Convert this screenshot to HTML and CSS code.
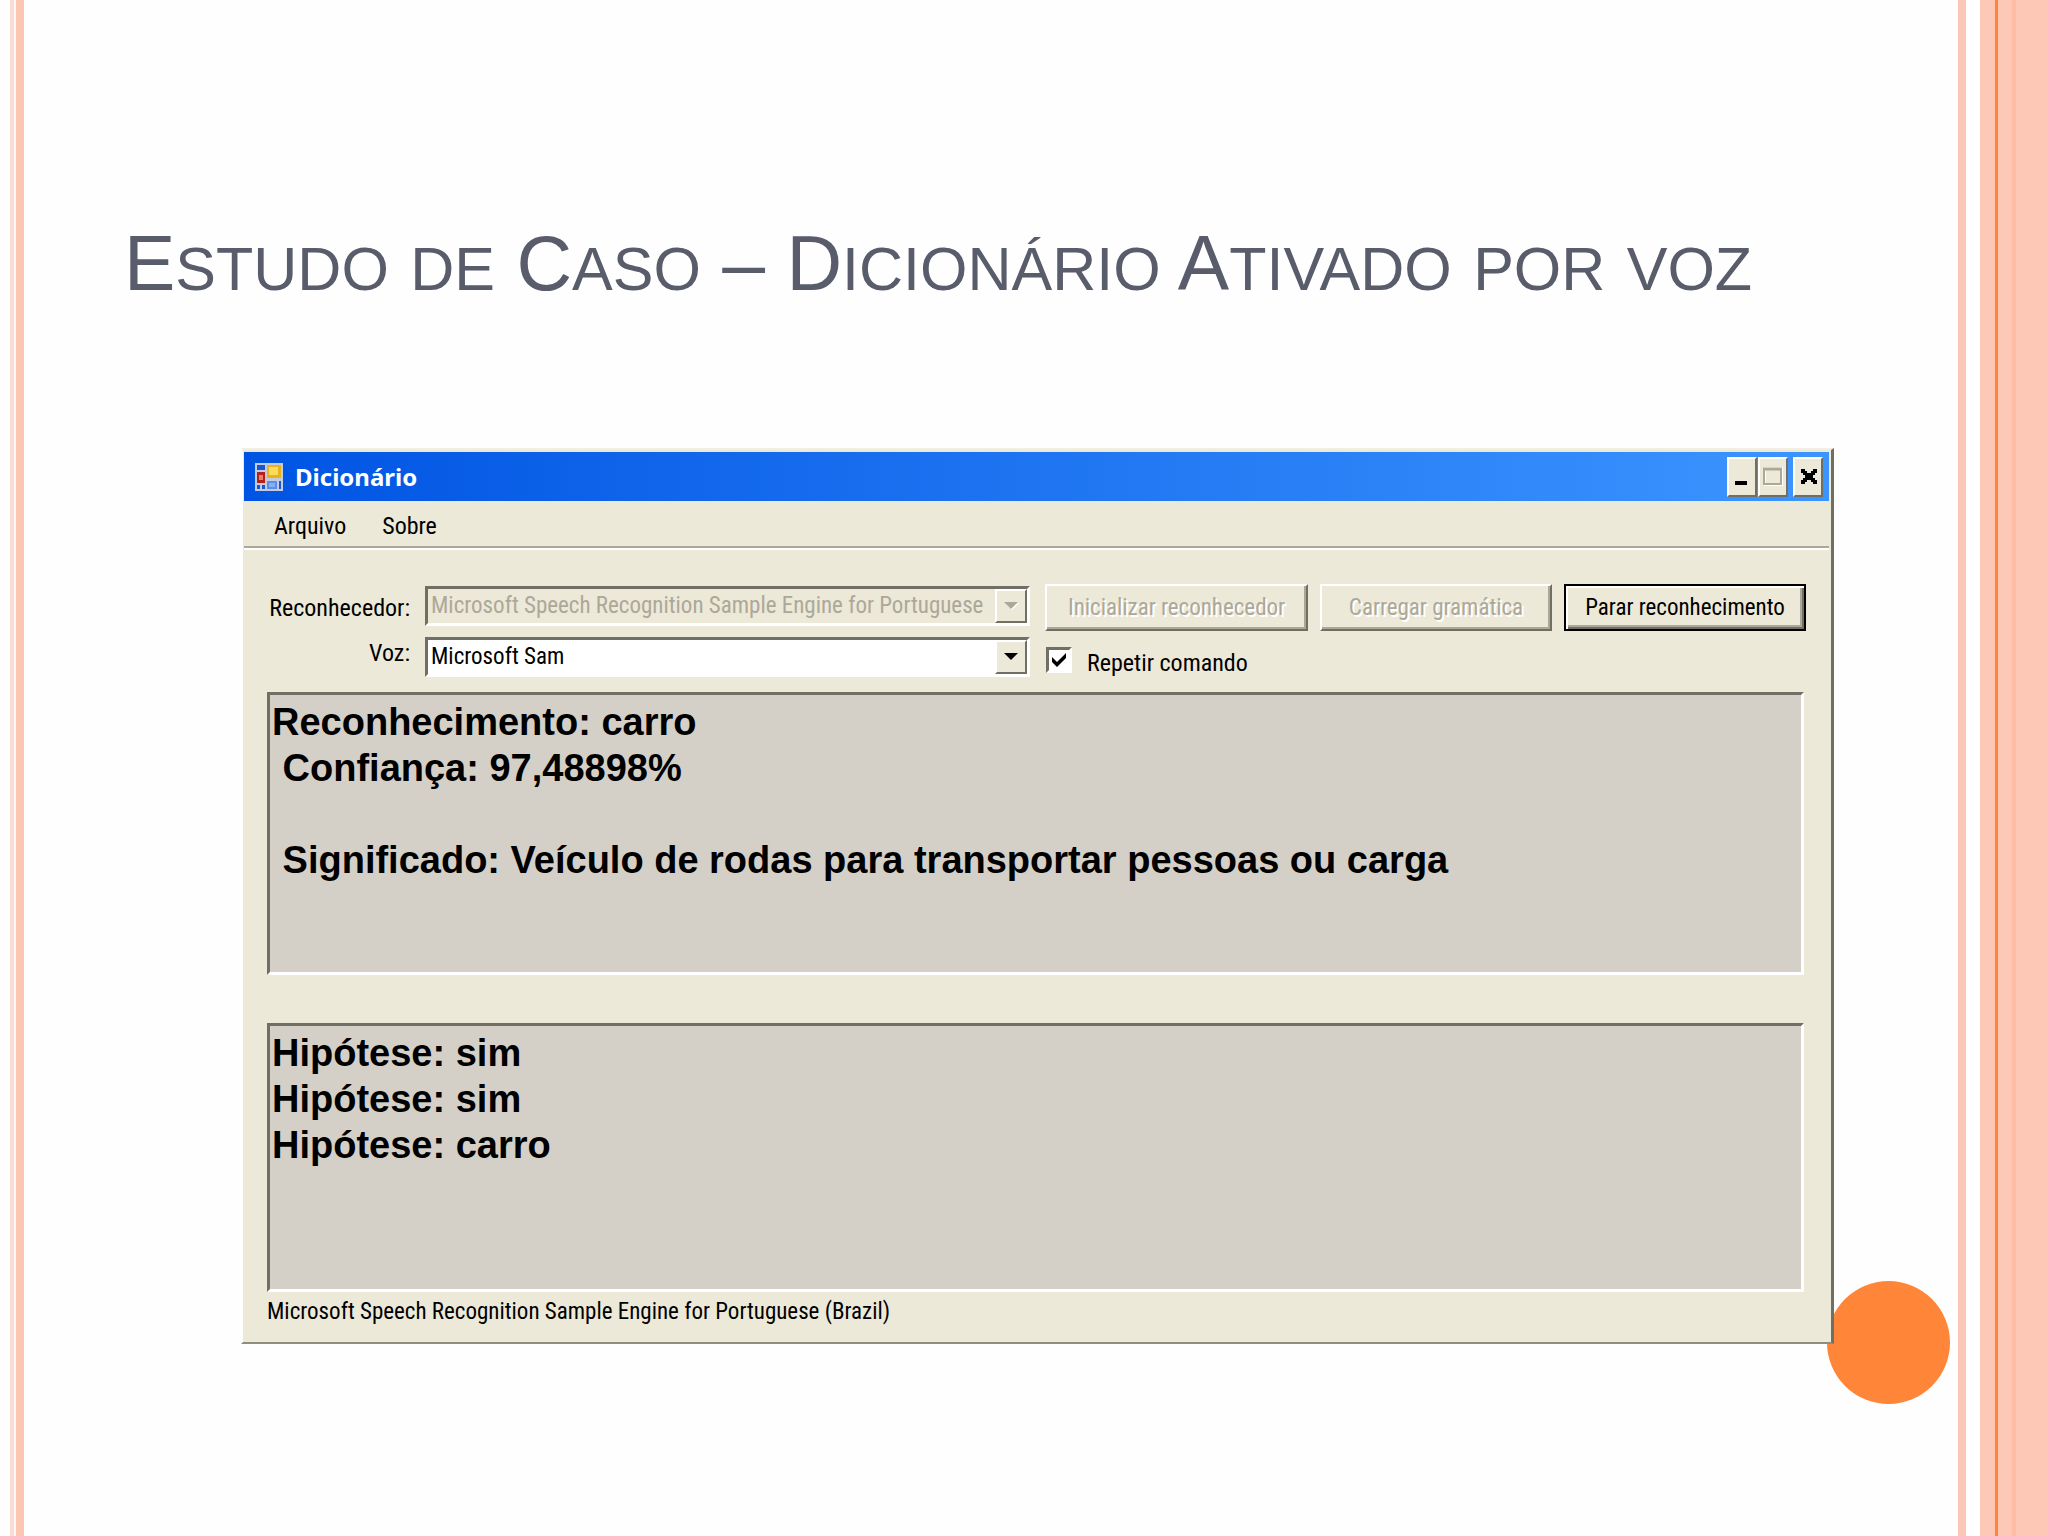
FILE: index.html
```html
<!DOCTYPE html>
<html lang="pt-BR">
<head>
<meta charset="utf-8">
<meta name="viewport" content="width=device-width, initial-scale=1">
<title>Estudo de Caso – Dicionário Ativado por voz</title>
<link rel="stylesheet" href="styles.css">
</head>
<body>
<div class="slide">
  <div class="rail rail-left"></div>
  <main class="content">
    <h1 class="title">E<span class="small">studo</span> <span class="small">de</span> C<span class="small">aso</span> – D<span class="small">icionário</span> A<span class="small">tivado</span> <span class="small">por</span> <span class="small">voz</span></h1>
    <div class="stage">
      <div class="dot"></div>
      <section class="window">
        <header class="titlebar">
          <svg class="app-icon" viewBox="0 0 28 28" aria-hidden="true">
            <rect width="28" height="28" fill="#c3cbdc"/>
            <rect x="2" y="2" width="8" height="5" fill="#1557d8"/>
            <rect x="2" y="9" width="8" height="11" fill="#b3201c"/>
            <rect x="4" y="12" width="4" height="5" fill="#e8806c"/>
            <rect x="12" y="2" width="14" height="13" fill="#e9b21d"/>
            <rect x="14" y="4" width="9" height="8" fill="#fbdc5a"/>
            <rect x="2" y="22" width="3" height="4" fill="#1557d8"/>
            <rect x="7" y="22" width="3" height="4" fill="#1557d8"/>
            <rect x="12" y="18" width="10" height="8" fill="#5b8ee8"/>
            <rect x="14" y="20" width="6" height="4" fill="#86aef4"/>
            <rect x="24" y="18" width="2" height="8" fill="#1557d8"/>
          </svg>
          <h2 class="caption">Dicionário</h2>
          <div class="window-buttons">
            <button class="wb" type="button" aria-label="Minimizar"><svg viewBox="0 0 26 36"><rect x="6" y="22" width="12" height="4" fill="#000"/></svg></button>
            <button class="wb" type="button" aria-label="Maximizar" disabled><svg viewBox="0 0 26 36"><path d="M5 9h17v17H5z" fill="none" stroke="#fff" stroke-width="2"/><path d="M4 10h17v15H4z" fill="none" stroke="#aca899" stroke-width="2"/><path d="M3 10h19" stroke="#aca899" stroke-width="3"/></svg></button>
            <button class="wb wb-close" type="button" aria-label="Fechar"><svg viewBox="0 0 26 36"><path d="M6 10h4v2h2v2h4v-2h2v-2h4v4h-2v2h-2v3h2v2h2v4h-4v-2h-2v-2h-4v2h-2v2H6v-4h2v-2h2v-3H8v-2H6z" fill="#000"/></svg></button>
          </div>
        </header>
        <nav class="menubar">
          <button class="menu-item" type="button">Arquivo</button>
          <button class="menu-item" type="button">Sobre</button>
        </nav>
        <form class="form">
          <div class="fields">
            <label class="label" for="rec">Reconhecedor:</label>
            <div class="combo">
              <select id="rec" disabled><option>Microsoft Speech Recognition Sample Engine for Portuguese</option></select>
              <span class="drop"><svg viewBox="0 0 14 8"><path d="M1 1h14l-7 7z" fill="#fff"/><path d="M0 0h14L7 7z" fill="#aca899"/></svg></span>
            </div>
            <div class="actions">
              <button class="btn btn-init" type="button" disabled>Inicializar reconhecedor</button>
              <button class="btn btn-load" type="button" disabled>Carregar gramática</button>
              <button class="btn btn-default" type="button">Parar reconhecimento</button>
            </div>
            <label class="label label-voice" for="voz">Voz:</label>
            <div class="combo">
              <select id="voz"><option>Microsoft Sam</option></select>
              <span class="drop"><svg viewBox="0 0 14 8"><path d="M0 0h14L7 7z" fill="#000"/></svg></span>
            </div>
            <label class="check"><input type="checkbox" checked>Repetir comando</label>
          </div>
          <textarea class="panel panel-result" readonly aria-label="Resultado">Reconhecimento: carro
 Confiança: 97,48898%

 Significado: Veículo de rodas para transportar pessoas ou carga</textarea>
          <textarea class="panel panel-guess" readonly aria-label="Hipóteses">Hipótese: sim
Hipótese: sim
Hipótese: carro</textarea>
        </form>
        <footer class="status">Microsoft Speech Recognition Sample Engine for Portuguese (Brazil)</footer>
      </section>
    </div>
  </main>
  <div class="rail rail-right"></div>
</div>
</body>
</html>
```
FILE: styles.css
```css
:root {
  --face: #ece9d8;
  --shade: #aca899;
  --dark: #716f64;
  --ui: "Roboto Condensed", Roboto, "Liberation Sans", sans-serif;
}

* { box-sizing: border-box; }

body { margin: 0; background: #fdfefd; }

.slide {
  display: grid;
  grid-template-columns: 24px minmax(0, 1fr) 90px;
  min-height: 100vh;
}

.rail-left {
  background: linear-gradient(to right,
    #fdfefd 10px, #fbdcd2 10px 14px, #fff8f4 14px 16px, #fbc7b3 16px 24px);
}

.rail-right {
  background: linear-gradient(to right,
    #fcc7b6 8px, #fff 8px 22px, #fdc9b6 22px 37px, #ff8538 37px 40px,
    #fdc9b6 40px 54px, #ffbca5 54px 58px, #fdc9b6 58px);
}

.content { padding: 219px 124px 120px 100px; }

.title {
  margin: 0;
  font: 400 77px/88px "Liberation Sans", Arial, sans-serif;
  color: #585c6b;
  text-transform: uppercase;
  white-space: nowrap;
}

.small { font-size: 61px; }

.stage {
  position: relative;
  z-index: 0;
  margin: 135px 0 0 117px;
}

.dot {
  position: absolute;
  z-index: -1;
  right: -116px;
  bottom: -60px;
  width: 123px;
  height: 123px;
  border-radius: 50%;
  background: #ff8538;
}

.window {
  padding: 2px 2px 2px 1px;
  border: 2px solid var(--shade);
  border-color: #f1efe2 var(--dark) #8f8d80 #fff;
  border-right-width: 3px;
  background: var(--face);
  color: #000;
  font: 24px/28px var(--ui);
}

.titlebar {
  display: flex;
  align-items: center;
  height: 49px;
  padding: 0 6px 0 11px;
  background: linear-gradient(to right, #0054e3, #3c95ff);
}

.app-icon { width: 28px; height: 28px; }

.caption {
  flex: 1;
  margin: 0 0 0 12px;
  color: #fff;
  font: 700 24px/32px "Noto Sans", "Open Sans", sans-serif;
}

.window-buttons { display: flex; gap: 1px; }

.wb {
  width: 30px;
  height: 40px;
  padding: 0;
  border: 2px solid;
  border-color: #fff var(--dark) var(--dark) #fff;
  background: var(--face);
}

.wb-close { margin-left: 4px; }

.wb svg { display: block; width: 26px; height: 36px; }

.menubar {
  display: flex;
  gap: 36px;
  height: 47px;
  padding: 4px 30px 0 30px;
  border-bottom: 2px solid var(--shade);
  box-shadow: 0 2px #fff;
}

.menu-item {
  padding: 0;
  border: 0;
  background: none;
  color: #000;
  font: 24px/28px var(--ui);
}

.form { padding: 36px 23px 0; }

.fields {
  display: grid;
  grid-template-columns: 143px minmax(0, 1fr) auto;
  column-gap: 15px;
  row-gap: 6px;
  align-items: center;
}

.label { text-align: right; white-space: nowrap; }

.label-voice { padding-bottom: 12px; }

.combo { position: relative; margin-bottom: 3px; }

.combo select {
  display: block;
  width: 100%;
  height: 40px;
  padding: 0 30px 0 3px;
  border: 3px solid;
  border-color: var(--dark) #fff #fff var(--dark);
  border-radius: 0;
  appearance: none;
  background: #fff;
  color: #000;
  font: 23px/28px var(--ui);
}

.combo select:disabled {
  background: var(--face);
  color: var(--shade);
  opacity: 1;
}

.drop {
  position: absolute;
  top: 3px;
  right: 3px;
  display: grid;
  place-items: center;
  width: 32px;
  height: 34px;
  border: 2px solid;
  border-color: #fff var(--dark) var(--dark) #fff;
  background: var(--face);
  pointer-events: none;
}

.drop svg { width: 14px; height: 8px; overflow: visible; }

.actions { display: flex; gap: 12px; }

.btn {
  height: 47px;
  padding: 0;
  border: 2px solid;
  border-color: #fff var(--dark) var(--dark) #fff;
  box-shadow: inset -2px -2px var(--shade);
  background: var(--face);
  color: #000;
  font: 23px/28px var(--ui);
}

.btn:disabled { color: var(--shade); text-shadow: 2px 2px #fff; }

.btn-init { width: 263px; }
.btn-load { width: 232px; }

.btn-default {
  width: 242px;
  border-color: #000;
  box-shadow: inset 2px 2px #fff, inset -2px -2px var(--dark), inset -4px -4px var(--shade);
}

.check {
  display: flex;
  align-items: center;
  gap: 15px;
  padding-top: 8px;
}

.check input {
  width: 26px;
  height: 26px;
  margin: 0 0 6px 1px;
  border: 3px solid;
  border-color: var(--dark) #fff #fff var(--dark);
  appearance: none;
  background: #fff url("data:image/svg+xml,%3Csvg xmlns='http://www.w3.org/2000/svg' viewBox='0 0 20 20'%3E%3Cpath d='M3 7l5 5 9-9v5l-9 9-5-5z'/%3E%3C/svg%3E") center / 20px 20px;
}

.panel {
  display: block;
  width: calc(100% - 2px);
  padding: 4px 2px;
  border: 3px solid;
  border-color: var(--dark) #fff #fff var(--dark);
  border-radius: 0;
  outline: 0;
  resize: none;
  background: #d4d0c8;
  color: #000;
  font: 700 38px/46px "Liberation Sans", Arial, sans-serif;
}

.panel-result { height: 283px; margin-top: 12px; }
.panel-guess { height: 269px; margin-top: 48px; }

.status { padding: 6px 23px 14px; font-size: 23px; }
```
